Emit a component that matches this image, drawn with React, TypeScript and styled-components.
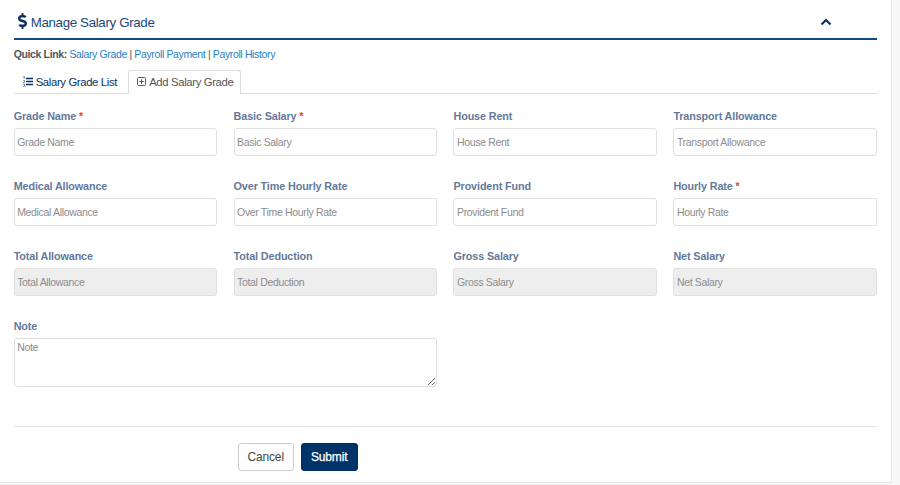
import React from "react";
import styled, { createGlobalStyle } from "styled-components";
import { FaDollarSign } from "react-icons/fa";

const GlobalStyle = createGlobalStyle`
  * { box-sizing: border-box; }
  body { margin: 0; background: #f7f7f7; overflow: hidden; }
  body, input, textarea, button { font-family: "Liberation Sans", Arial, sans-serif; }
`;

const Panel = styled.main`
  width: 892px;
  height: 483px;
  padding: 0 14px 0 13.7px;
  background: #fff;
  border-right: 1px solid #e6e9ed;
  border-bottom: 1px solid #e2e4e8;
`;

const Header = styled.header`
  display: flex;
  align-items: center;
  height: 40px;
  padding: 5px 45px 0 4px;
  border-bottom: 2px solid #174a7c;
  color: #0a3262;
`;

const DollarIcon = styled(FaDollarSign)`
  width: 9px;
  height: 16px;
  margin: -1px 4px 0 0;
`;

const Title = styled.h1`
  flex: 1;
  margin: 3px 0 0;
  font-size: 13.3px;
  letter-spacing: -0.33px;
  line-height: 18px;
  font-weight: 400;
  color: #174a7c;
`;

const Collapse = styled.svg`
  width: 12px;
  height: 8px;
  margin-top: 1px;
`;

const QuickLinks = styled.nav`
  display: flex;
  gap: 2.5px;
  height: 30px;
  padding-top: 8px;
  font-size: 10.5px;
  letter-spacing: -0.36px;
  line-height: 13px;
  color: #555;
`;

const QuickLabel = styled.strong`
  color: #555;
`;

const Link = styled.a`
  color: #1f7fc8;
  text-decoration: none;
`;

const Tabs = styled.div`
  display: flex;
  height: 24px;
  border-bottom: 1px solid #ddd;
`;

const Tab = styled.div<{ $active?: boolean }>`
  display: flex;
  align-items: center;
  gap: 3px;
  height: 24px;
  width: ${(p) => (p.$active ? "113px" : "114.5px")};
  padding: 0 0 2px 8px;
  border: 1px solid ${(p) => (p.$active ? "#ddd" : "transparent")};
  border-bottom: 0;
  border-radius: 3px 3px 0 0;
  background: ${(p) => (p.$active ? "#fff" : "transparent")};
  color: ${(p) => (p.$active ? "#555" : "#0a3262")};
  font-size: 11.3px;
  letter-spacing: -0.35px;
  white-space: nowrap;
`;

const TabIcon = styled.svg`
  flex: none;
  height: 9px;
  overflow: visible;
  fill: none;
  stroke: currentColor;
`;

const Grid = styled.div`
  display: grid;
  grid-template-columns: repeat(4, 1fr);
  column-gap: 16.3px;
  grid-auto-rows: 70px;
  padding-top: 15px;
`;

const Field = styled.label<{ $wide?: boolean }>`
  display: flex;
  flex-direction: column;
  grid-column: span ${(p) => (p.$wide ? 2 : 1)};
`;

const Caption = styled.span`
  height: 19px;
  font-size: 10.8px;
  letter-spacing: -0.12px;
  line-height: 14px;
  font-weight: 700;
  color: #64799a;
`;

const Required = styled.span`
  color: #f33;
`;

const Input = styled.input`
  width: 100%;
  height: 28px;
  padding: 0 3px 1px 2.5px;
  border: 1px solid #dfdfdf;
  border-radius: 3px;
  background: #fff;
  font-size: 10.5px;
  letter-spacing: -0.34px;
  outline: 0;
  &::placeholder { color: #8c8c8c; opacity: 1; }
  &:disabled { background: #eee; }
`;

const NoteArea = styled.textarea`
  display: block;
  flex: none;
  width: 100%;
  height: 49px;
  padding: 2px 3px 3px 2.5px;
  border: 1px solid #dfdfdf;
  border-radius: 3px;
  font-size: 10.5px;
  letter-spacing: -0.34px;
  line-height: 13px;
  resize: vertical;
  &::placeholder { color: #8c8c8c; opacity: 1; }
`;

const Footer = styled.footer`
  display: flex;
  gap: 7px;
  margin-top: 37px;
  padding: 16px 0 0 224px;
  border-top: 1px solid #e5e5e5;
`;

const Button = styled.button<{ $primary?: boolean }>`
  height: 28px;
  width: ${(p) => (p.$primary ? "57px" : "56px")};
  padding: 0 0 1px;
  border: 1px solid ${(p) => (p.$primary ? "#002d5e" : "#ccc")};
  border-radius: 3px;
  background: ${(p) => (p.$primary ? "#003468" : "#fff")};
  color: ${(p) => (p.$primary ? "#fff" : "#444")};
  font-size: 12px;
  letter-spacing: -0.15px;
  -webkit-text-stroke: ${(p) => (p.$primary ? "0.25px #fff" : "0")};
`;

type FieldSpec = { name: string; required?: boolean; disabled?: boolean };

const fields: FieldSpec[] = [
  { name: "Grade Name", required: true },
  { name: "Basic Salary", required: true },
  { name: "House Rent" },
  { name: "Transport Allowance" },
  { name: "Medical Allowance" },
  { name: "Over Time Hourly Rate" },
  { name: "Provident Fund" },
  { name: "Hourly Rate", required: true },
  { name: "Total Allowance", disabled: true },
  { name: "Total Deduction", disabled: true },
  { name: "Gross Salary", disabled: true },
  { name: "Net Salary", disabled: true },
];

export default function App() {
  return (
    <>
      <GlobalStyle />
      <Panel>
        <Header>
          <DollarIcon />
          <Title>Manage Salary Grade</Title>
          <Collapse viewBox="0 0 12 8" fill="none" stroke="currentColor" strokeWidth="2.2">
            <path d="M1.500 6.500 6 2l4.500 4.500" />
          </Collapse>
        </Header>
        <QuickLinks>
          <QuickLabel>Quick Link:</QuickLabel>
          <Link>Salary Grade</Link>
          <span>|</span>
          <Link>Payroll Payment</Link>
          <span>|</span>
          <Link>Payroll History</Link>
        </QuickLinks>
        <Tabs>
          <Tab>
            <TabIcon width="10" viewBox="0 0 10 9">
              <path d="M3 1.500h7M3 4.500h7M3 7.500h7" strokeWidth="1.3" />
              <path d="M.5-.5 1.200-1v3M.3 3.500h1.200v1L.3 5.500h1.400M.3 7h1.300L1 8l.6.500-.3 1H.2" strokeWidth=".6" />
            </TabIcon>
            Salary Grade List
          </Tab>
          <Tab $active>
            <TabIcon width="9" viewBox="0 0 9 9">
              <rect x=".5" y=".5" width="8" height="8" rx="1" />
              <path d="M2.200 4.500h4.600M4.500 2.200v4.600" />
            </TabIcon>
            Add Salary Grade
          </Tab>
        </Tabs>
        <Grid>
          {fields.map((f) => (
            <Field key={f.name}>
              <Caption>
                {f.name} {f.required && <Required>*</Required>}
              </Caption>
              <Input placeholder={f.name} disabled={f.disabled} />
            </Field>
          ))}
          <Field $wide>
            <Caption>Note</Caption>
            <NoteArea placeholder="Note" />
          </Field>
        </Grid>
        <Footer>
          <Button>Cancel</Button>
          <Button $primary>Submit</Button>
        </Footer>
      </Panel>
    </>
  );
}
